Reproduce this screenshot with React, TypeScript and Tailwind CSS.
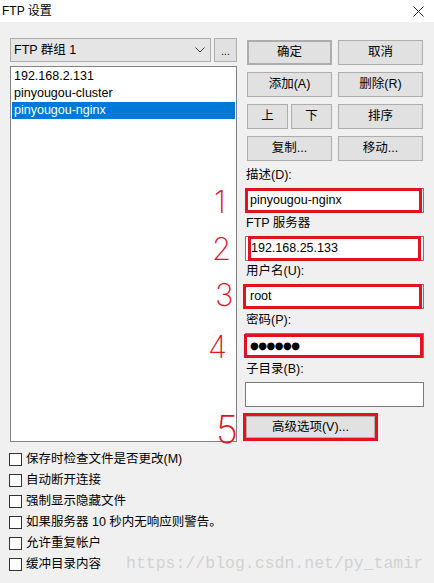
import React from "react";

const font = "font-['Liberation_Sans','Noto_Sans_CJK_SC',sans-serif]";

function Btn({ children, className = "" }: { children: React.ReactNode; className?: string }) {
    return (
        <div className={`h-[25px] flex items-center justify-center bg-[#e1e1e1] border border-[#adadad] ${className}`}>
            {children}
        </div>
    );
}

function Field({
    label,
    value,
    mark,
    className = "",
}: {
    label: string;
    value?: React.ReactNode;
    mark?: string;
    className?: string;
}) {
    return (
        <div className={`flex flex-col ${className}`}>
            <div className="h-[16px] leading-[16px] pl-[1px]">{label}</div>
            <div className="relative mt-[5px] h-[25px] bg-white border border-[#7a7a7a] flex items-center pl-[4px]">
                {value}
                {mark && <div className={`absolute border-[3px] border-[#e3121f] ${mark}`} />}
            </div>
        </div>
    );
}

const checks = [
    "保存时检查文件是否更改(M)",
    "自动断开连接",
    "强制显示隐藏文件",
    "如果服务器 10 秒内无响应则警告。",
    "允许重复帐户",
    "缓冲目录内容",
];

export default function App() {
    return (
        <div className={`relative w-[434px] h-[583px] bg-[#f0f0f0] overflow-hidden text-[12.5px] text-black ${font}`}>
            {/* title bar */}
            <div className="h-[22px] bg-white flex items-center justify-between pl-[2px] pr-[10px] text-[12px]">
                <span>FTP 设置</span>
                <svg width="11" height="11" viewBox="0 0 11 11" className="mt-[1px]">
                    <path d="M0.5 0.5 L10.5 10.5 M10.5 0.5 L0.5 10.5" stroke="#222" strokeWidth="1" />
                </svg>
            </div>

            <div className="flex pt-[16px] pl-[10px]">
                {/* left column */}
                <div className="w-[227px] flex flex-col">
                    <div className="flex gap-[3px] h-[24px]">
                        <div className="flex-1 bg-[#e5e5e5] border border-[#adadad] flex items-center justify-between pl-[3px] pr-[5px]">
                            <span>FTP 群组 1</span>
                            <svg width="10" height="6" viewBox="0 0 10 6">
                                <path d="M0.5 0.5 L5 5 L9.5 0.5" fill="none" stroke="#444" strokeWidth="1" />
                            </svg>
                        </div>
                        <div className="w-[23px] bg-[#e1e1e1] border border-[#adadad] flex items-end justify-center pb-[4px] text-[10px] leading-none">
                            ...
                        </div>
                    </div>
                    <div className="mt-[4px] h-[376px] bg-white border border-[#828282] pt-[1px] px-[1px]">
                        <div className="h-[17px] leading-[17px] pl-[2px]">192.168.2.131</div>
                        <div className="h-[17px] leading-[17px] pl-[2px]">pinyougou-cluster</div>
                        <div className="h-[17px] leading-[17px] pl-[2px] bg-[#0078d7] text-white">pinyougou-nginx</div>
                    </div>
                </div>

                {/* right column */}
                <div className="ml-[8px] w-[179px] flex flex-col pt-[2px]">
                    <div className="grid grid-cols-2 gap-x-[6px] gap-y-[7px] pl-[2px] pr-[1px]">
                        <Btn className="border-[#0078d7] border-[2px]">确定</Btn>
                        <Btn>取消</Btn>
                        <Btn>添加(A)</Btn>
                        <Btn>删除(R)</Btn>
                        <div className="flex gap-[3px]">
                            <Btn className="flex-1">上</Btn>
                            <Btn className="flex-1">下</Btn>
                        </div>
                        <Btn>排序</Btn>
                        <Btn>复制...</Btn>
                        <Btn>移动...</Btn>
                    </div>

                    <Field
                        className="mt-[6px]"
                        label="描述(D):"
                        value="pinyougou-nginx"
                        mark="-left-[1px] -top-[1px] right-[1px] -bottom-[1px]"
                    />
                    <Field
                        className="mt-[2px]"
                        label="FTP 服务器"
                        value={<span className="pl-[1px]">192.168.25.133</span>}
                        mark="left-[2px] -top-[1px] right-[2px] -bottom-[1px]"
                    />
                    <Field
                        className="mt-[2px]"
                        label="用户名(U):"
                        value="root"
                        mark="-left-[3px] -top-[1px] right-[1px] -bottom-[1px]"
                    />
                    <Field
                        className="mt-[3px]"
                        label="密码(P):"
                        value={<span className="text-[10px] tracking-[-0.5px] font-['DejaVu_Sans',sans-serif]">●●●●●●</span>}
                        mark="-left-[2px] top-0 right-0 -bottom-[1px]"
                    />
                    <Field className="mt-[3px]" label="子目录(B):" />

                    <div className="relative mt-[9px] ml-[1px] w-[129px] h-[22px] bg-[#e1e1e1] border border-[#adadad] flex items-center justify-center">
                        高级选项(V)...
                        <div className="absolute -left-[4px] -top-[4px] -right-[4px] -bottom-[4px] border-[3px] border-[#e3121f]" />
                    </div>
                </div>
            </div>

            {/* checkboxes */}
            <div className="mt-[7px] flex flex-col pl-[9px]">
                {checks.map((c, i) => (
                    <div key={c} className="h-[21px] flex items-center">
                        <div className="w-[13px] h-[13px] bg-white border border-[#333]" />
                        <span className="ml-[4px]">{c}</span>
                        {i === checks.length - 1 && (
                            <span className="ml-[25px] text-[16.5px] text-[#d2d2d2] font-['Liberation_Mono',monospace]">
                                https://blog.csdn.net/py_tamir
                            </span>
                        )}
                    </div>
                ))}
            </div>

            {/* hand-written annotation numbers */}
            <div className="absolute inset-0 pointer-events-none font-['Inter',sans-serif] font-extralight text-[31px] leading-none text-[#e3121f]">
                <span className="absolute left-[214px] top-[186px]">1</span>
                <span className="absolute left-[212px] top-[233px]">2</span>
                <span className="absolute left-[215px] top-[279px]">3</span>
                <span className="absolute left-[208px] top-[331px]">4</span>
                <span className="absolute left-[216px] top-[410px] text-[38px]">5</span>
            </div>
        </div>
    );
}
